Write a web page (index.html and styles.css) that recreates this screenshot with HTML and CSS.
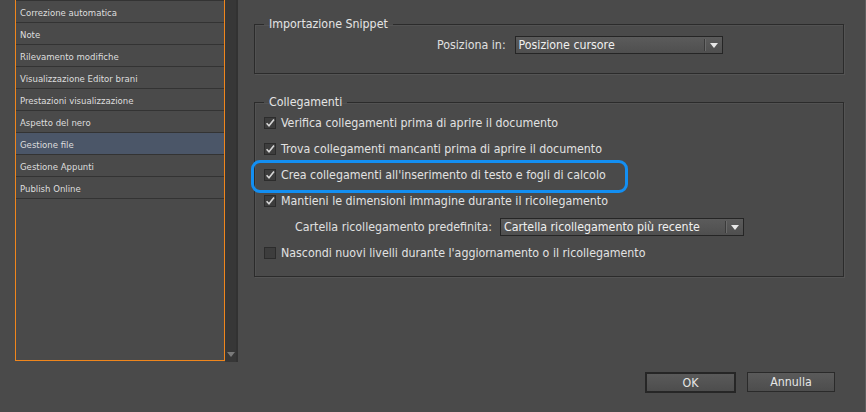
FILE: index.html
```html
<!DOCTYPE html>
<html lang="it">
<head>
<meta charset="utf-8">
<title>Preferenze - Gestione file</title>
<link rel="stylesheet" href="styles.css">
</head>
<body>
<div class="dialog">
  <div class="sidebar">
    <ul class="list">
      <li>Correzione automatica</li>
      <li>Note</li>
      <li>Rilevamento modifiche</li>
      <li>Visualizzazione Editor brani</li>
      <li>Prestazioni visualizzazione</li>
      <li>Aspetto del nero</li>
      <li class="selected">Gestione file</li>
      <li>Gestione Appunti</li>
      <li>Publish Online</li>
      <li class="last"></li>
    </ul>
    <div class="scrollbar"><span class="scroll-arrow"></span></div>
  </div>

  <div class="main">
    <fieldset class="group group-snippet">
      <legend>Importazione Snippet</legend>
      <div class="field-row">
        <label class="field-label">Posiziona in:</label>
        <div class="select select-pos"><span class="select-text">Posizione cursore</span><span class="select-btn"><span class="tri"></span></span></div>
      </div>
    </fieldset>

    <fieldset class="group group-links">
      <legend>Collegamenti</legend>
      <div class="check-row"><span class="cb checked"><svg viewBox="0 0 12 12" width="12" height="12"><path d="M2.6 6.2 L5 8.8 L10 2.4" /></svg></span><span>Verifica collegamenti prima di aprire il documento</span></div>
      <div class="check-row"><span class="cb checked"><svg viewBox="0 0 12 12" width="12" height="12"><path d="M2.6 6.2 L5 8.8 L10 2.4" /></svg></span><span>Trova collegamenti mancanti prima di aprire il documento</span></div>
      <div class="check-row"><span class="cb checked"><svg viewBox="0 0 12 12" width="12" height="12"><path d="M2.6 6.2 L5 8.8 L10 2.4" /></svg></span><span>Crea collegamenti all'inserimento di testo e fogli di calcolo</span></div>
      <div class="check-row"><span class="cb checked"><svg viewBox="0 0 12 12" width="12" height="12"><path d="M2.6 6.2 L5 8.8 L10 2.4" /></svg></span><span>Mantieni le dimensioni immagine durante il ricollegamento</span></div>
      <div class="check-row sub-row">
        <label class="field-label">Cartella ricollegamento predefinita:</label>
        <div class="select select-folder"><span class="select-text">Cartella ricollegamento più recente</span><span class="select-btn"><span class="tri"></span></span></div>
      </div>
      <div class="check-row"><span class="cb"></span><span>Nascondi nuovi livelli durante l'aggiornamento o il ricollegamento</span></div>
      <div class="highlight"></div>
    </fieldset>

    <div class="buttons">
      <button class="btn btn-default">OK</button>
      <button class="btn">Annulla</button>
    </div>
  </div>
  <div class="edge"></div>
</div>
</body>
</html>
```

FILE: styles.css
```css
* { box-sizing: border-box; }
html, body {
  margin: 0;
  padding: 0;
  background: #4a4a4a;
}
body {
  width: 866px;
  height: 412px;
  overflow: hidden;
  font-family: "DejaVu Sans Condensed", "Liberation Sans", Arial, sans-serif;
  color: #e2e2e2;
}
.dialog {
  display: flex;
  height: 412px;
  padding-left: 15px;
}
.sidebar {
  display: flex;
  align-items: flex-start;
}
.list {
  list-style: none;
  margin: 0;
  padding: 0;
  width: 210px;
  height: 361px;
  border: 1px solid #f0861c;
  border-top: none;
  font-size: 9.5px;
  overflow: hidden;
}
.list li {
  height: 22px;
  border-top: 1px solid #333333;
  padding-left: 4px;
  line-height: 23px;
  color: #dedede;
}
.list li.selected {
  background: #4b5668;
}
.scrollbar {
  width: 13px;
  height: 362px;
  background: #373737;
  border-right: 2px solid #323232;
  display: flex;
  align-items: flex-end;
  justify-content: center;
  padding-bottom: 5px;
}
.scroll-arrow {
  width: 0;
  height: 0;
  border-left: 4px solid transparent;
  border-right: 4px solid transparent;
  border-top: 5px solid #7a7a7a;
}
.main {
  margin-left: 16px;
  width: 590px;
  display: flex;
  flex-direction: column;
  padding-top: 16px;
}
.group {
  margin: 0;
  border: 1px solid #2b2b2b;
  box-shadow: 1px 1px 0 #545454, inset 1px 1px 0 #525252;
  padding: 0 9px;
  position: relative;
}
.group legend {
  padding: 0 5px;
  font-size: 12.3px;
  line-height: 16px;
  color: #e4e4e4;
}
.group-snippet {
  height: 58px;
}
.field-row {
  display: flex;
  align-items: center;
  padding-left: 173px;
  margin-top: 4px;
  font-size: 12.3px;
}
.field-label {
  color: #e0e0e0;
  margin-right: 9px;
}
.select {
  display: flex;
  align-items: center;
  height: 18px;
  border: 1px solid #252525;
  background: linear-gradient(#5b5b5b, #4f4f4f);
  color: #f0f0f0;
  font-size: 12.3px;
}
.select-text {
  flex: 1;
  padding-left: 3px;
  white-space: nowrap;
}
.select-btn {
  width: 17px;
  height: 12px;
  display: flex;
  align-items: center;
  justify-content: center;
  border-left: 1px solid #3a3a3a;
  box-shadow: inset 1px 0 0 #6a6a6a;
  margin-right: 1px;
}
.tri {
  width: 0;
  height: 0;
  margin-left: 3px;
  border-left: 4px solid transparent;
  border-right: 4px solid transparent;
  border-top: 5px solid #e8e8e8;
}
.select-pos { width: 208px; }
.select-folder { width: 244px; }
.group-links {
  margin-top: 20px;
  padding-bottom: 10px;
}
.check-row {
  display: flex;
  align-items: center;
  height: 26px;
  font-size: 12.3px;
  color: #e2e2e2;
}
.cb {
  width: 12px;
  height: 12px;
  border: 1px solid #2c2c2c;
  background: #3d3d3d;
  margin-right: 5px;
  display: flex;
  align-items: center;
  justify-content: center;
  flex: none;
}
.cb svg {
  margin: -1px;
}
.cb path {
  fill: none;
  stroke: #d6d6d6;
  stroke-width: 1.6;
}
.sub-row {
  padding-left: 31px;
}
.sub-row .field-label {
  margin-right: 8px;
}
.highlight {
  position: absolute;
  left: -4px;
  top: 50px;
  width: 377px;
  height: 33px;
  border: 3px solid #138ff2;
  border-radius: 9px;
  pointer-events: none;
}
.buttons {
  display: flex;
  justify-content: flex-end;
  gap: 11px;
  margin-top: 95px;
  padding-right: 9px;
}
.btn {
  font-family: "DejaVu Sans Condensed", "Liberation Sans", Arial, sans-serif;
  font-size: 12.3px;
  color: #e6e6e6;
  height: 20px;
  width: 88px;
  padding: 0;
  border: 1px solid #2a2a2a;
  background: linear-gradient(#5a5a5a, #4d4d4d);
}
.btn-default {
  width: 91px;
  height: 21px;
  border: 2px solid #262626;
}
.edge {
  margin-left: auto;
  width: 1px;
  height: 412px;
  background: #5e5e5e;
}
```
